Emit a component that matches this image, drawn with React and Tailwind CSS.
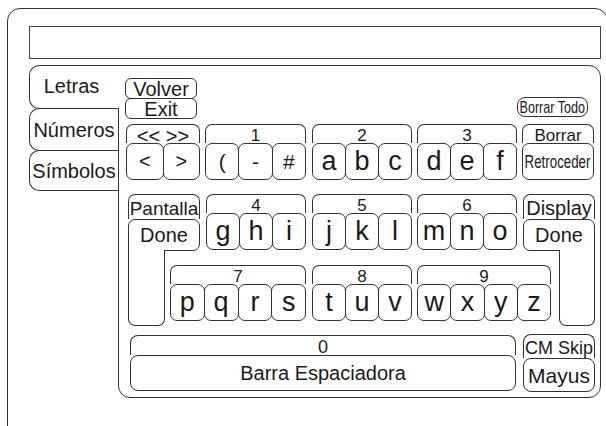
import React from "react";

const B = "border-[#333]";

function Grp({ label, keys, w, keyText = "text-[27px]", labelText = "text-[17px]" }) {
  return (
    <div className={`flex flex-col ${w}`}>
      <div className={`h-[19px] border-x border-t ${B} rounded-t-[7px] flex items-center justify-center ${labelText} leading-none pt-[3px] whitespace-nowrap`}>
        {label}
      </div>
      <div className="flex">
        {keys.map((k, i) => (
          <div
            key={i}
            className={`h-[37px] flex-1 border ${B} rounded-[7px] bg-white flex items-center justify-center ${keyText} leading-none pb-[1px] ${i > 0 ? "-ml-px" : ""}`}
          >
            {k}
          </div>
        ))}
      </div>
    </div>
  );
}

export default function App() {
  return (
    <div
      className="w-[606px] h-[426px] overflow-hidden bg-white text-[#1a1a1a]"
      style={{ fontFamily: '"Liberation Sans", Arial, sans-serif' }}
    >
      <div className={`ml-[7px] mt-[8px] w-[601px] h-[440px] border ${B} rounded-[13px]`}>
        <div className="ml-[21px] mt-[17px] w-[572px] h-[33px] border border-[#444]" />
        <div className="ml-[21px] mt-[6px] flex">
          {/* tabs */}
          <div className="w-[89px] flex flex-col">
            <div className={`relative z-10 w-[90px] h-[44px] bg-white border-l border-t border-b ${B} rounded-l-[10px] flex items-center justify-center text-[20px] leading-none pr-[6px] pb-[2px]`}>
              Letras
            </div>
            <div className={`-mt-px w-[89px] h-[43px] border-l border-t border-b ${B} rounded-l-[10px] flex items-center justify-center text-[20px] leading-none`}>
              Números
            </div>
            <div className={`-mt-px w-[89px] h-[41px] border-l border-t border-b ${B} rounded-l-[10px] flex items-center justify-center text-[20px] leading-none`}>
              Símbolos
            </div>
          </div>
          {/* panel */}
          <div className={`w-[483px] h-[333px] border ${B} rounded-r-[12px] rounded-bl-[12px] flex flex-col`}>
            {/* row A */}
            <div className="mt-[12px] h-[40px] flex pl-[6px] pr-[12px]">
              <div className="w-[72px] flex flex-col">
                <div className={`h-[21px] border ${B} rounded-[6px] flex items-center justify-center text-[20px] leading-none pt-px`}>
                  Volver
                </div>
                <div className={`-mt-px h-[21px] border ${B} rounded-[6px] flex items-center justify-center text-[20px] leading-none pt-px`}>
                  Exit
                </div>
              </div>
              <div className={`ml-auto self-end mb-px w-[71px] h-[20px] border ${B} rounded-[8px] flex items-center justify-center text-[17px] leading-none whitespace-nowrap`}>
                <span className="inline-block scale-x-[0.74]">Borrar Todo</span>
              </div>
            </div>
            {/* row 1 */}
            <div className="mt-[6px] flex pl-[7px]">
              <Grp label="<< >>" keys={["<", ">"]} w="w-[74px]" keyText="text-[20px]" labelText="text-[20px]" />
              <div className="ml-[5px]">
                <Grp label="1" keys={["(", "-", "#"]} w="w-[101px]" keyText="text-[21px]" />
              </div>
              <div className="ml-[6px]">
                <Grp label="2" keys={["a", "b", "c"]} w="w-[100px]" />
              </div>
              <div className="ml-[5px]">
                <Grp label="3" keys={["d", "e", "f"]} w="w-[100px]" />
              </div>
              <div className="ml-[5px] w-[72px] flex flex-col">
                <div className={`h-[19px] border-x border-t ${B} rounded-t-[7px] flex items-center justify-center text-[17px] leading-none pt-[3px]`}>
                  Borrar
                </div>
                <div className={`h-[37px] border ${B} rounded-[7px] flex items-center justify-center text-[18px] leading-none whitespace-nowrap`}>
                  <span className="inline-block scale-x-[0.74]">Retroceder</span>
                </div>
              </div>
            </div>
            {/* middle */}
            <div className="mt-[14px] ml-[9px] grid grid-cols-[37px_5px_30px_6px_100px_6px_100px_5px_100px_6px_28px_8px_36px] grid-rows-[57px_14px_57px_4px]">
              <div className="col-start-1 col-span-3 row-start-1 flex flex-col">
                <div className={`h-[25px] border-x border-t ${B} rounded-t-[7px] flex items-center justify-center text-[19px] leading-none pt-[2px]`}>
                  Pantalla
                </div>
                <div className={`h-[32px] border ${B} rounded-t-[7px] rounded-br-[7px] flex items-start justify-center text-[20px] leading-none pt-[5px]`}>
                  Done
                </div>
              </div>
              <div className={`col-start-1 row-start-2 row-span-3 self-start -mt-px h-[76px] bg-white border-x border-b ${B} rounded-b-[7px]`} />

              <div className="col-start-5 row-start-1">
                <Grp label="4" keys={["g", "h", "i"]} w="w-[100px]" />
              </div>
              <div className="col-start-7 row-start-1">
                <Grp label="5" keys={["j", "k", "l"]} w="w-[100px]" />
              </div>
              <div className="col-start-9 row-start-1">
                <Grp label="6" keys={["m", "n", "o"]} w="w-[100px]" />
              </div>

              <div className="col-start-11 col-span-3 row-start-1 flex flex-col">
                <div className={`h-[25px] border-x border-t ${B} rounded-t-[7px] flex items-center justify-center text-[20px] leading-none pt-[2px]`}>
                  Display
                </div>
                <div className={`h-[32px] border ${B} rounded-t-[7px] rounded-bl-[7px] flex items-start justify-center text-[20px] leading-none pt-[5px]`}>
                  Done
                </div>
              </div>
              <div className={`col-start-13 row-start-2 row-span-3 self-start -mt-px h-[76px] bg-white border-x border-b ${B} rounded-b-[7px]`} />

              <div className="col-start-3 col-span-3 row-start-3">
                <Grp label="7" keys={["p", "q", "r", "s"]} w="w-[136px]" />
              </div>
              <div className="col-start-7 row-start-3">
                <Grp label="8" keys={["t", "u", "v"]} w="w-[100px]" />
              </div>
              <div className="col-start-9 col-span-3 row-start-3">
                <Grp label="9" keys={["w", "x", "y", "z"]} w="w-[134px]" />
              </div>
            </div>
            {/* row 4 */}
            <div className="mt-[9px] flex pl-[11px]">
              <div className="w-[386px] flex flex-col">
                <div className={`h-[20px] border-x border-t ${B} rounded-t-[8px] flex items-center justify-center text-[18px] leading-none pt-[3px]`}>
                  0
                </div>
                <div className={`h-[36px] border ${B} rounded-[8px] flex items-center justify-center text-[20px] leading-none`}>
                  Barra Espaciadora
                </div>
              </div>
              <div className="ml-[7px] w-[72px] -mt-px flex flex-col">
                <div className={`h-[24px] border-x border-t ${B} rounded-t-[8px] flex items-center justify-center text-[18px] leading-none whitespace-nowrap pt-[2px]`}>
                  CM Skip
                </div>
                <div className={`h-[34px] border ${B} rounded-[8px] flex items-center justify-center text-[21px] leading-none`}>
                  Mayus
                </div>
              </div>
            </div>
          </div>
        </div>
      </div>
    </div>
  );
}
